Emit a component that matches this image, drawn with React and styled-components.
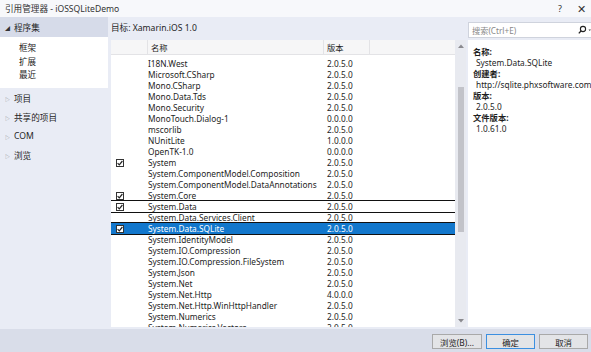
import React from "react";
import styled, { createGlobalStyle } from "styled-components";

const Global = createGlobalStyle`
  html, body { margin: 0; padding: 0; }
  body { font-family: "Noto Sans", "Noto Sans CJK SC", sans-serif; }
`;

const FONT = `"Noto Sans", "Noto Sans CJK SC", sans-serif`;

const Window = styled.div`
  width: 591px;
  height: 352px;
  background: #e9ecf5;
  display: flex;
  flex-direction: column;
  overflow: hidden;
  font-family: ${FONT};
  font-size: 8.3px;
  color: #1e1e1e;
`;

const TitleBar = styled.div`
  height: 17px;
  flex: none;
  display: flex;
  align-items: center;
  padding-left: 5px;
  background: #f7f8fb;
  font-size: 8.6px;
  color: #333;
`;

const TitleText = styled.div`
  flex: 1;
`;

const TitleButton = styled.div`
  width: ${(p) => p.$w}px;
  text-align: center;
  font-size: ${(p) => p.$size}px;
  color: #333;
`;

const Body = styled.div`
  flex: 1;
  display: flex;
  min-height: 0;
`;

const Sidebar = styled.div`
  width: 108px;
  flex: none;
  display: flex;
  flex-direction: column;
  font-size: 8.6px;
`;

const NavHeader = styled.div`
  height: ${(p) => (p.$active ? 20 : 19)}px;
  display: flex;
  align-items: center;
  padding-left: 5px;
  gap: 4px;
  background: ${(p) => (p.$active ? "#d6dbe9" : "transparent")};
`;

const Arrow = styled.span`
  font-size: 5px;
  color: ${(p) => (p.$open ? "#333" : "#888")};
  width: 5px;
`;

const SubList = styled.div`
  background: #fff;
  padding: 5px 0 5px 19px;
  display: flex;
  flex-direction: column;
  margin-bottom: 1px;
`;

const SubItem = styled.div`
  height: 13.5px;
  line-height: 13.5px;
`;

const Main = styled.div`
  flex: 1;
  display: flex;
  flex-direction: column;
  padding-left: 3px;
  min-width: 0;
`;

const TopRow = styled.div`
  height: 23px;
  flex: none;
  display: flex;
  align-items: center;
`;

const Target = styled.div`
  flex: 1;
  padding-bottom: 2px;
  font-size: 8.6px;
`;

const SearchBox = styled.div`
  width: 123px;
  height: 16px;
  margin-top: 2px;
  background: #fff;
  border: 1px solid #cfd3dd;
  border-right: none;
  box-sizing: border-box;
  display: flex;
  align-items: center;
  padding-left: 3px;
  color: #888;
  font-size: 8.2px;
`;

const SearchText = styled.div`
  flex: 1;
`;

const Content = styled.div`
  flex: 1;
  display: flex;
  gap: 2px;
  min-height: 0;
  padding-bottom: 2px;
`;

const ListBox = styled.div`
  width: 355px;
  flex: none;
  display: flex;
  background: #fff;
  overflow: hidden;
`;

const ListInner = styled.div`
  flex: 1;
  display: flex;
  flex-direction: column;
  overflow: hidden;
`;

const HeaderRow = styled.div`
  height: 15px;
  flex: none;
  display: grid;
  grid-template-columns: 37px 176px 46px 1fr;
  background: #f6f6f7;
  border-bottom: 1px solid #e3e3e6;
  box-sizing: border-box;
`;

const HeaderCell = styled.div`
  border-right: ${(p) => (p.$last ? "none" : "1px solid #e3e3e6")};
  padding-left: ${(p) => p.$pl || 0}px;
  display: flex;
  align-items: center;
`;

const Rows = styled.div`
  padding-top: 3px;
  display: flex;
  flex-direction: column;
`;

const Row = styled.div`
  height: 11px;
  flex: none;
  display: grid;
  grid-template-columns: 37px 179px 1fr;
  align-items: center;
  position: relative;
  background: ${(p) => (p.$selected ? "#1277cc" : "transparent")};
  color: ${(p) => (p.$selected ? "#fff" : "#1e1e1e")};
  outline: ${(p) => (p.$selected || p.$focus ? "1.5px solid #111" : "none")};
  outline-offset: 0.5px;
  z-index: ${(p) => (p.$selected || p.$focus ? 1 : 0)};
  white-space: nowrap;
`;

const CheckCell = styled.div`
  display: flex;
  align-items: center;
  padding-left: 5px;
`;

const Box = styled.div`
  width: 8px;
  height: 8px;
  box-sizing: border-box;
  border: 1px solid #333;
  background: #fff;
  display: flex;
  align-items: center;
  justify-content: center;
`;

const Cell = styled.div`
  line-height: 11px;
`;

const Scrollbar = styled.div`
  width: 11px;
  flex: none;
  background: #e8eaf0;
  display: flex;
  flex-direction: column;
  align-items: center;
`;

const ScrollArrow = styled.div`
  height: 12px;
  display: flex;
  align-items: center;
  justify-content: center;
`;

const Thumb = styled.div`
  width: 6px;
  height: 145px;
  margin-top: 35px;
  background: #c2c3c9;
`;

const Spacer = styled.div`
  flex: 1;
`;

const Details = styled.div`
  flex: 1;
  background: #fff;
  padding: 6px 0 0 5px;
  display: flex;
  flex-direction: column;
`;

const DetailLabel = styled.div`
  font-weight: bold;
  height: 11px;
  line-height: 11px;
`;

const DetailValue = styled.div`
  height: 11px;
  line-height: 11px;
  padding-left: 3px;
  white-space: nowrap;
`;

const Footer = styled.div`
  height: 23px;
  flex: none;
  background: #d9dde9;
  display: flex;
  justify-content: flex-end;
  align-items: center;
  gap: 4px;
  padding: 2px 3px 0 0;
  box-sizing: border-box;
`;

const Button = styled.div`
  width: ${(p) => p.$w || 49}px;
  height: 15px;
  box-sizing: border-box;
  border: 1px solid ${(p) => (p.$default ? "#3c8fe0" : "#a9a9a9")};
  background: #e3e4e7;
  display: flex;
  align-items: center;
  justify-content: center;
  font-size: 8.4px;
  color: #222;
`;

const CheckIcon = ({ color = "#222" }) => (
  <svg width="6" height="6" viewBox="0 0 6 6">
    <path d="M0.6 3.1 L2.3 4.8 L5.4 1" stroke={color} strokeWidth="1.2" fill="none" />
  </svg>
);

const rows = [
  ["I18N.West", "2.0.5.0"],
  ["Microsoft.CSharp", "2.0.5.0"],
  ["Mono.CSharp", "2.0.5.0"],
  ["Mono.Data.Tds", "2.0.5.0"],
  ["Mono.Security", "2.0.5.0"],
  ["MonoTouch.Dialog-1", "0.0.0.0"],
  ["mscorlib", "2.0.5.0"],
  ["NUnitLite", "1.0.0.0"],
  ["OpenTK-1.0", "0.0.0.0"],
  ["System", "2.0.5.0", true],
  ["System.ComponentModel.Composition", "2.0.5.0"],
  ["System.ComponentModel.DataAnnotations", "2.0.5.0"],
  ["System.Core", "2.0.5.0", true],
  ["System.Data", "2.0.5.0", true, "focus"],
  ["System.Data.Services.Client", "2.0.5.0"],
  ["System.Data.SQLite", "2.0.5.0", true, "selected"],
  ["System.IdentityModel", "2.0.5.0"],
  ["System.IO.Compression", "2.0.5.0"],
  ["System.IO.Compression.FileSystem", "2.0.5.0"],
  ["System.Json", "2.0.5.0"],
  ["System.Net", "2.0.5.0"],
  ["System.Net.Http", "4.0.0.0"],
  ["System.Net.Http.WinHttpHandler", "2.0.5.0"],
  ["System.Numerics", "2.0.5.0"],
  ["System.Numerics.Vectors", "2.0.5.0"],
];

export default function App() {
  return (
    <>
      <Global />
      <Window>
        <TitleBar>
          <TitleText>引用管理器 - iOSSQLiteDemo</TitleText>
          <TitleButton $w={22} $size={9}>?</TitleButton>
          <TitleButton $w={20} $size={11}>✕</TitleButton>
        </TitleBar>
        <Body>
          <Sidebar>
            <NavHeader $active>
              <Arrow $open>◢</Arrow>
              程序集
            </NavHeader>
            <SubList>
              <SubItem>框架</SubItem>
              <SubItem>扩展</SubItem>
              <SubItem>最近</SubItem>
            </SubList>
            <NavHeader>
              <Arrow>▷</Arrow>
              项目
            </NavHeader>
            <NavHeader>
              <Arrow>▷</Arrow>
              共享的项目
            </NavHeader>
            <NavHeader>
              <Arrow>▷</Arrow>
              COM
            </NavHeader>
            <NavHeader>
              <Arrow>▷</Arrow>
              浏览
            </NavHeader>
          </Sidebar>
          <Main>
            <TopRow>
              <Target>目标: Xamarin.iOS 1.0</Target>
              <SearchBox>
                <SearchText>搜索(Ctrl+E)</SearchText>
                <svg width="14" height="10" viewBox="0 0 14 10">
                  <circle cx="6" cy="4" r="2.6" stroke="#222" strokeWidth="1.1" fill="none" />
                  <path d="M4.2 5.8 L1.8 8.4" stroke="#222" strokeWidth="1.3" />
                  <path d="M11.5 4.5 L14 4.5 L12.75 6 Z" fill="#444" />
                </svg>
              </SearchBox>
            </TopRow>
            <Content>
              <ListBox>
                <ListInner>
                  <HeaderRow>
                    <HeaderCell />
                    <HeaderCell $pl={3}>名称</HeaderCell>
                    <HeaderCell $pl={3}>版本</HeaderCell>
                    <HeaderCell $last />
                  </HeaderRow>
                  <Rows>
                    {rows.map(([name, ver, checked, state]) => (
                      <Row key={name} $selected={state === "selected"} $focus={state === "focus"}>
                        <CheckCell>
                          {checked && (
                            <Box>
                              <CheckIcon />
                            </Box>
                          )}
                        </CheckCell>
                        <Cell>{name}</Cell>
                        <Cell>{ver}</Cell>
                      </Row>
                    ))}
                  </Rows>
                </ListInner>
                <Scrollbar>
                  <ScrollArrow>
                    <svg width="6" height="4" viewBox="0 0 6 4">
                      <path d="M0 4 L3 0.5 L6 4 Z" fill="#8a8a8f" />
                    </svg>
                  </ScrollArrow>
                  <Thumb />
                  <Spacer />
                  <ScrollArrow>
                    <svg width="6" height="4" viewBox="0 0 6 4">
                      <path d="M0 0 L3 3.5 L6 0 Z" fill="#8a8a8f" />
                    </svg>
                  </ScrollArrow>
                </Scrollbar>
              </ListBox>
              <Details>
                <DetailLabel>名称:</DetailLabel>
                <DetailValue>System.Data.SQLite</DetailValue>
                <DetailLabel>创建者:</DetailLabel>
                <DetailValue>http://sqlite.phxsoftware.com</DetailValue>
                <DetailLabel>版本:</DetailLabel>
                <DetailValue>2.0.5.0</DetailValue>
                <DetailLabel>文件版本:</DetailLabel>
                <DetailValue>1.0.61.0</DetailValue>
              </Details>
            </Content>
          </Main>
        </Body>
        <Footer>
          <Button $w={50}>浏览(B)...</Button>
          <Button $default>确定</Button>
          <Button>取消</Button>
        </Footer>
      </Window>
    </>
  );
}
